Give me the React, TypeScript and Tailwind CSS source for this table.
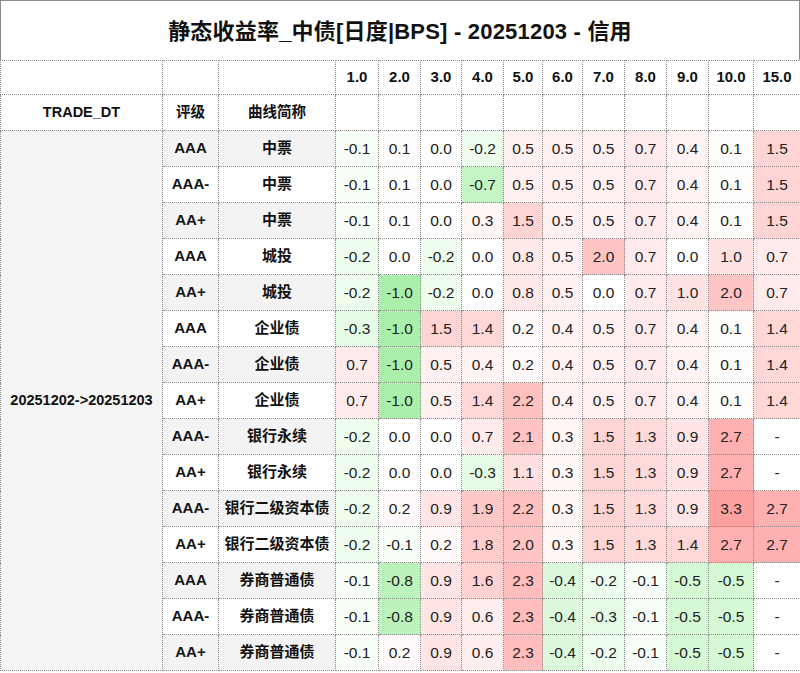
import React from 'react';

const tenors = ['1.0', '2.0', '3.0', '4.0', '5.0', '6.0', '7.0', '8.0', '9.0', '10.0', '15.0'];
const widths = [43, 42, 41, 42, 39, 40, 42, 42, 42, 45, 47];

type Row = { rating: string; name: string; vals: (number | null)[] };

const rows: Row[] = [
  { rating: 'AAA', name: '中票', vals: [-0.1, 0.1, 0.0, -0.2, 0.5, 0.5, 0.5, 0.7, 0.4, 0.1, 1.5] },
  { rating: 'AAA-', name: '中票', vals: [-0.1, 0.1, 0.0, -0.7, 0.5, 0.5, 0.5, 0.7, 0.4, 0.1, 1.5] },
  { rating: 'AA+', name: '中票', vals: [-0.1, 0.1, 0.0, 0.3, 1.5, 0.5, 0.5, 0.7, 0.4, 0.1, 1.5] },
  { rating: 'AAA', name: '城投', vals: [-0.2, 0.0, -0.2, 0.0, 0.8, 0.5, 2.0, 0.7, 0.0, 1.0, 0.7] },
  { rating: 'AA+', name: '城投', vals: [-0.2, -1.0, -0.2, 0.0, 0.8, 0.5, 0.0, 0.7, 1.0, 2.0, 0.7] },
  { rating: 'AAA', name: '企业债', vals: [-0.3, -1.0, 1.5, 1.4, 0.2, 0.4, 0.5, 0.7, 0.4, 0.1, 1.4] },
  { rating: 'AAA-', name: '企业债', vals: [0.7, -1.0, 0.5, 0.4, 0.2, 0.4, 0.5, 0.7, 0.4, 0.1, 1.4] },
  { rating: 'AA+', name: '企业债', vals: [0.7, -1.0, 0.5, 1.4, 2.2, 0.4, 0.5, 0.7, 0.4, 0.1, 1.4] },
  { rating: 'AAA-', name: '银行永续', vals: [-0.2, 0.0, 0.0, 0.7, 2.1, 0.3, 1.5, 1.3, 0.9, 2.7, null] },
  { rating: 'AA+', name: '银行永续', vals: [-0.2, 0.0, 0.0, -0.3, 1.1, 0.3, 1.5, 1.3, 0.9, 2.7, null] },
  { rating: 'AAA-', name: '银行二级资本债', vals: [-0.2, 0.2, 0.9, 1.9, 2.2, 0.3, 1.5, 1.3, 0.9, 3.3, 2.7] },
  { rating: 'AA+', name: '银行二级资本债', vals: [-0.2, -0.1, 0.2, 1.8, 2.0, 0.3, 1.5, 1.3, 1.4, 2.7, 2.7] },
  { rating: 'AAA', name: '券商普通债', vals: [-0.1, -0.8, 0.9, 1.6, 2.3, -0.4, -0.2, -0.1, -0.5, -0.5, null] },
  { rating: 'AAA-', name: '券商普通债', vals: [-0.1, -0.8, 0.9, 0.6, 2.3, -0.4, -0.3, -0.1, -0.5, -0.5, null] },
  { rating: 'AA+', name: '券商普通债', vals: [-0.1, 0.2, 0.9, 0.6, 2.3, -0.4, -0.2, -0.1, -0.5, -0.5, null] },
];

// red for widening, green for tightening
function cellColor(v: number | null) {
  if (v === null || v === 0) return '#ffffff';
  if (v > 0) {
    const t = Math.min(1, v / 3.3);
    const g = Math.round(255 - 95 * t);
    return `rgb(255, ${g}, ${g})`;
  }
  const t = Math.min(1, -v / 1.0);
  const rb = Math.round(255 - 85 * t);
  const g = Math.round(255 - 15 * t);
  return `rgb(${rb}, ${g}, ${rb})`;
}

const cell = 'border border-dotted border-[#8a8a8a] text-center p-0';

export default function App() {
  return (
    <div className="w-[800px] h-[673px] bg-white text-[#111] overflow-hidden" style={{ fontFamily: '"Liberation Sans", "Noto Sans CJK SC", sans-serif' }}>
      <div className="h-[60px] border border-b-0 border-[#8a8a8a] flex items-center justify-center">
        <h1 className="text-[22px] font-bold tracking-[0.2px] pt-[2px]">静态收益率_中债[日度|BPS] - 20251203 - 信用</h1>
      </div>
      <table className="border-collapse table-fixed w-[800px]">
        <colgroup>
          <col className="w-[162px]" />
          <col className="w-[56px]" />
          <col className="w-[117px]" />
          {widths.map((w, i) => (
            <col key={i} style={{ width: w }} />
          ))}
        </colgroup>
        <thead>
          <tr className="h-[34px]">
            <th className={cell}></th>
            <th className={cell}></th>
            <th className={cell}></th>
            {tenors.map((t) => (
              <th key={t} className={`${cell} text-[15px] font-bold`}>
                {t}
              </th>
            ))}
          </tr>
          <tr className="h-[36px]">
            <th className={`${cell} text-[14.5px] font-bold`}>TRADE_DT</th>
            <th className={`${cell} text-[14.5px] font-bold`}>评级</th>
            <th className={`${cell} text-[14.5px] font-bold`}>曲线简称</th>
            {tenors.map((t) => (
              <th key={t} className={cell}></th>
            ))}
          </tr>
        </thead>
        <tbody>
          {rows.map((r, i) => {
            const bg = i % 2 === 0 ? 'bg-[#f3f3f3]' : 'bg-white';
            return (
              <tr key={i} className="h-[36px]">
                {i === 0 && (
                  <td rowSpan={rows.length} className={`${cell} bg-[#f5f5f5] text-[14.5px] font-bold`}>
                    20251202-&gt;20251203
                  </td>
                )}
                <td className={`${cell} ${bg} text-[15px] font-bold`}>{r.rating}</td>
                <td className={`${cell} ${bg} text-[15px] font-bold`}>{r.name}</td>
                {r.vals.map((v, j) => (
                  <td key={j} className={`${cell} text-[15.5px] text-[#222]`} style={{ backgroundColor: cellColor(v) }}>
                    {v === null ? '-' : v.toFixed(1)}
                  </td>
                ))}
              </tr>
            );
          })}
        </tbody>
      </table>
    </div>
  );
}
